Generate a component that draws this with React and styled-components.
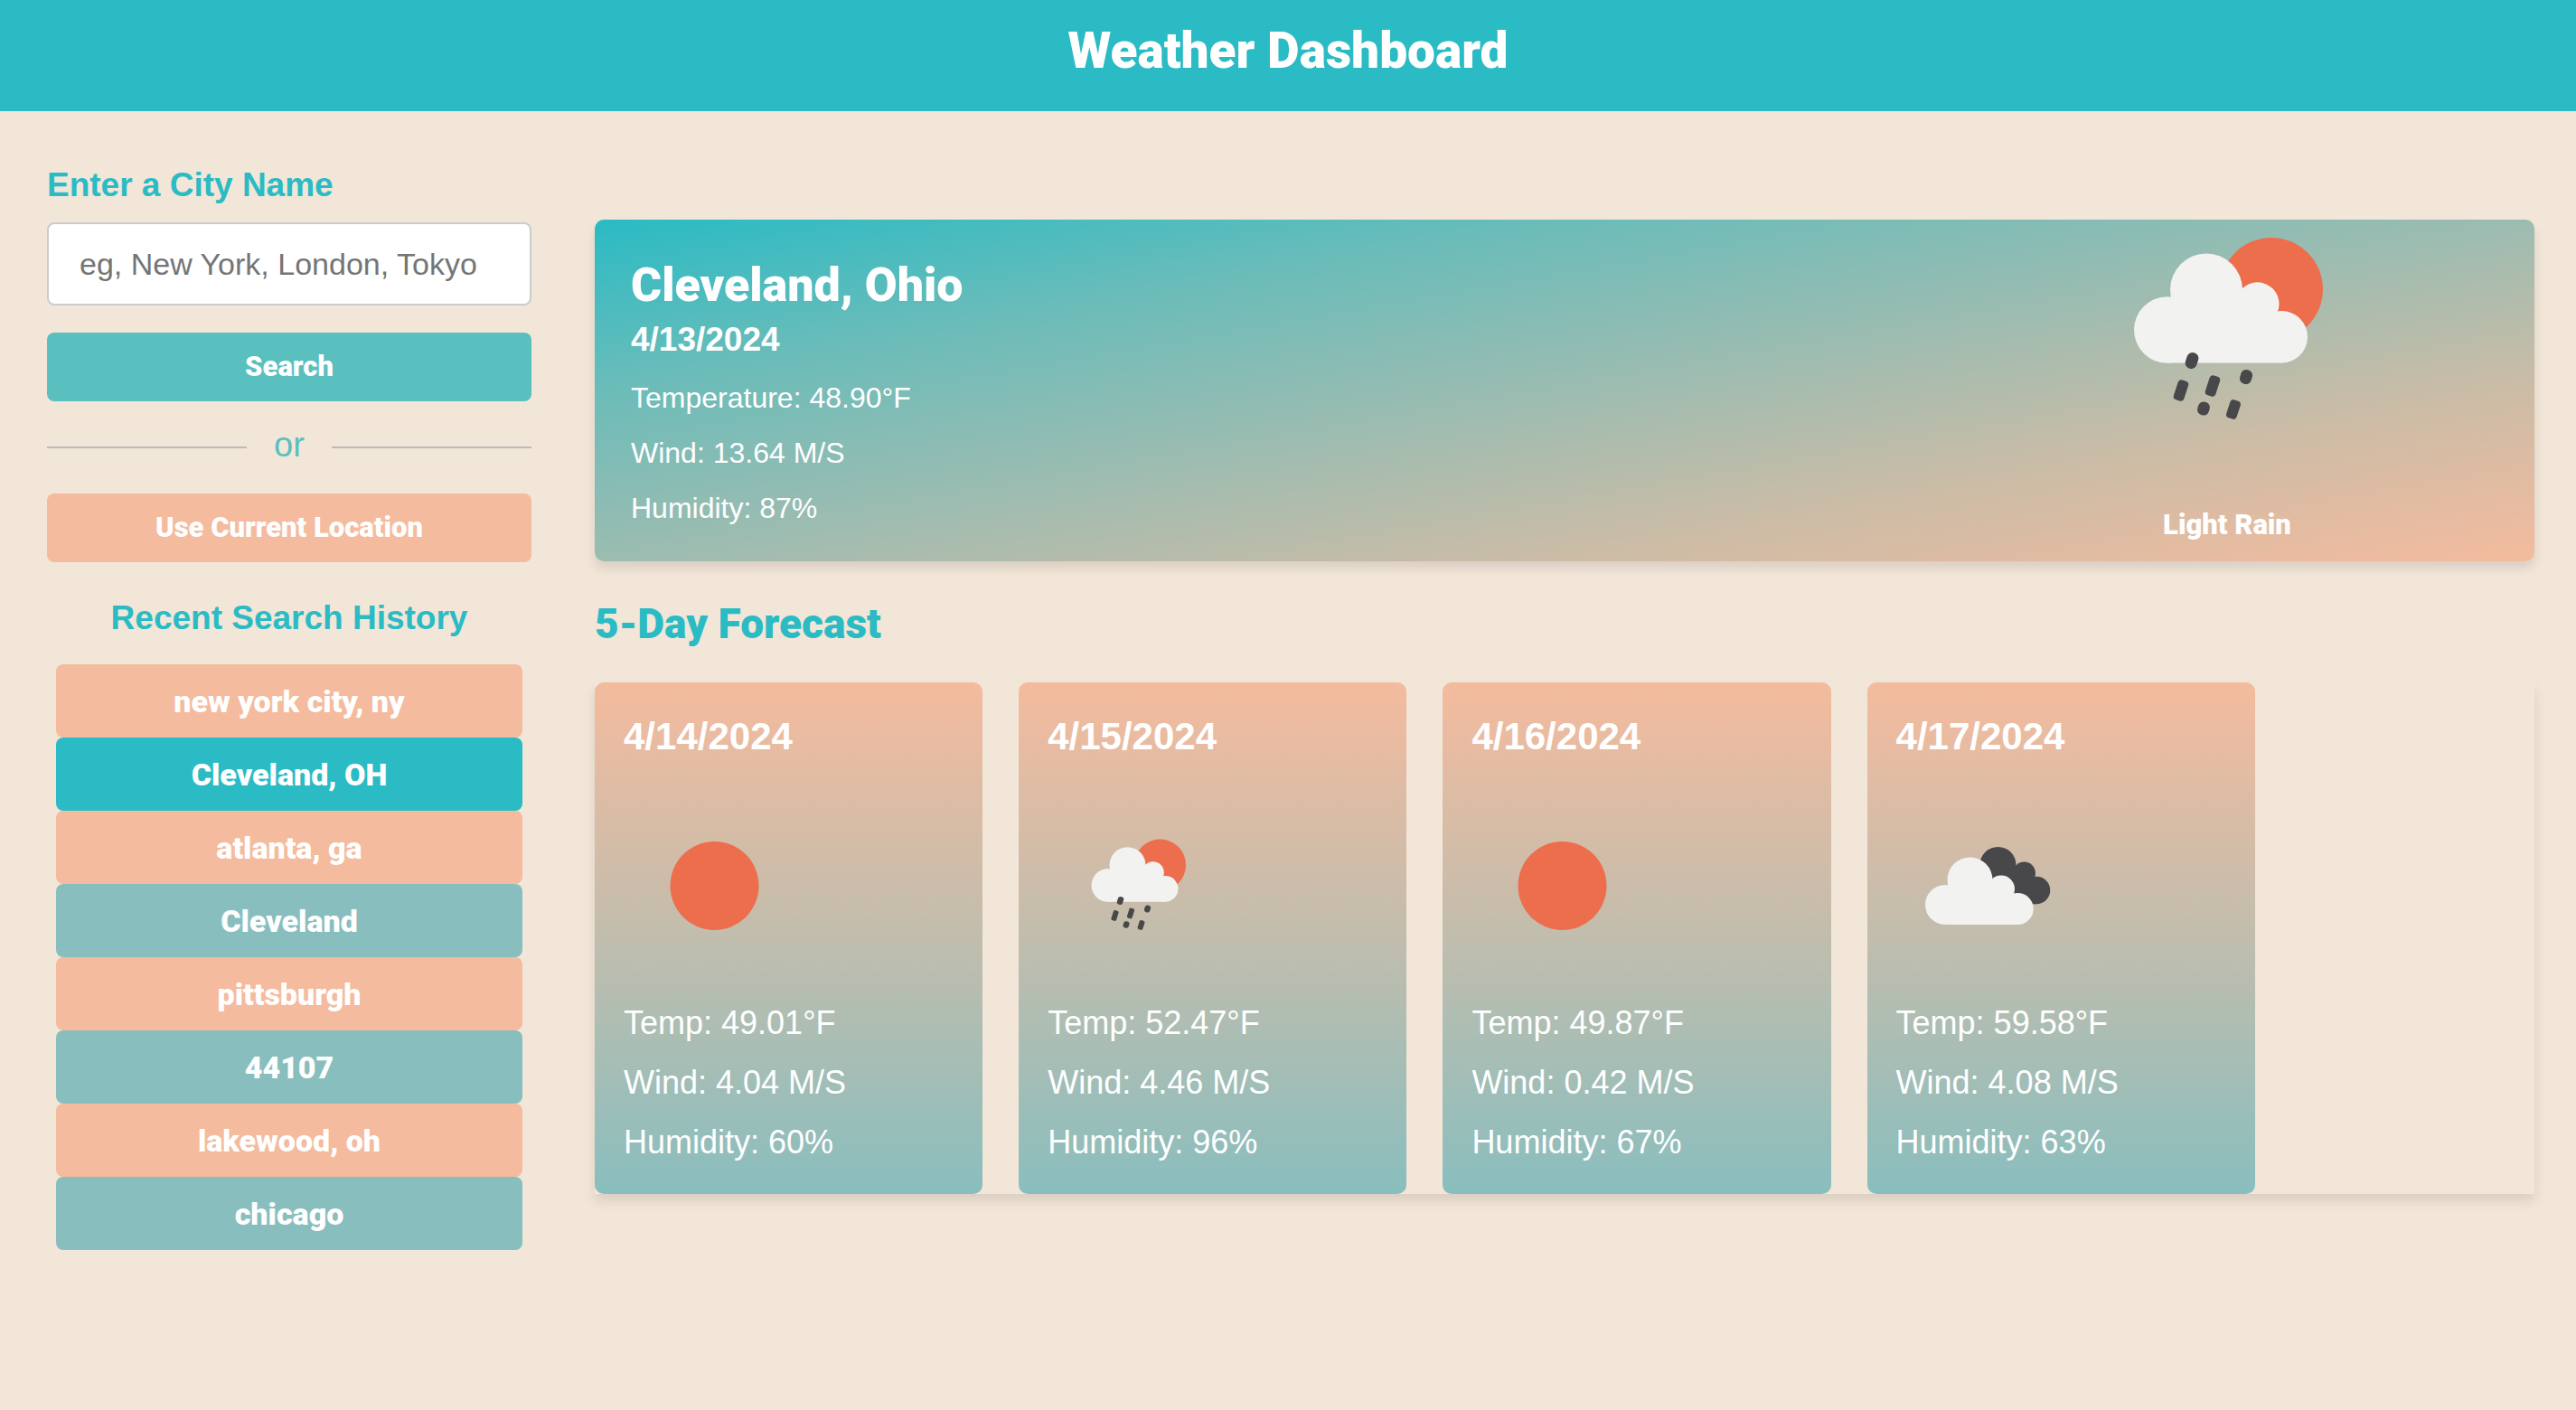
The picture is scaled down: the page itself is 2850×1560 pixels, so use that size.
import React from "react";
import styled, { createGlobalStyle } from "styled-components";

const teal = "#2abbc4";
const sea = "#5abfbf";
const mist = "#89bebe";
const peach = "#f4bb9e";
const sand = "#f2e6d8";
const heavy = `"Roboto", "Liberation Sans", sans-serif`;

const GlobalStyle = createGlobalStyle`
  *, *::before, *::after { box-sizing: border-box; }
  body {
    margin: 0;
    min-height: 100vh;
    background: ${sand};
    font-family: "Liberation Sans", Arial, sans-serif;
  }
  h1, h2, h3, p, ul { margin: 0; padding: 0; }
  ul { list-style: none; }
`;

const Header = styled.header`
  padding: 24px 24px 35px;
  background: ${teal};
  color: #fff;
  text-align: center;
`;

const Title = styled.h1`
  font: 900 55px/64px ${heavy};
`;

const Layout = styled.div`
  display: grid;
  grid-template-columns: 536px minmax(0, 1fr);
  column-gap: 70px;
  align-items: start;
  padding: 60px 46px 60px 52px;
`;

const Sidebar = styled.aside`
  display: flex;
  flex-direction: column;
`;

const SearchForm = styled.form`
  display: flex;
  flex-direction: column;
`;

const FieldLabel = styled.label`
  color: ${teal};
  font-size: 37px;
  font-weight: bold;
  line-height: 44px;
  margin-bottom: 19px;
`;

const CityInput = styled.input`
  width: 100%;
  height: 92px;
  padding: 0 34px;
  border: 2px solid #ccc;
  border-radius: 8px;
  background: #fff;
  font: 34px "Liberation Sans", Arial, sans-serif;
  &::placeholder { color: #757575; opacity: 1; }
`;

const ActionButton = styled.button`
  width: 100%;
  height: 76px;
  border: 0;
  border-radius: 8px;
  background: ${(p) => p.$color};
  color: #fff;
  font: 900 31px/36px ${heavy};
  cursor: pointer;
  margin-top: ${(p) => p.$gap || 0};
`;

const Divider = styled.div`
  display: flex;
  align-items: center;
  gap: 30px;
  height: 102px;
  color: ${sea};
  font-size: 38px;
  line-height: 44px;
  &::before, &::after {
    content: "";
    flex: 1;
    height: 2px;
    background: #bbb;
  }
`;

const DividerText = styled.span`
  padding-bottom: 6px;
`;

const HistoryTitle = styled.h2`
  margin: 40px 0 29px;
  color: ${teal};
  font-size: 37px;
  line-height: 44px;
  text-align: center;
`;

const HistoryList = styled.ul`
  padding: 0 10px;
`;

const HistoryButton = styled.button`
  display: block;
  width: 100%;
  height: 81px;
  border: 0;
  border-radius: 8px;
  background: ${(p) => p.$color};
  color: #fff;
  font: 900 34px/40px ${heavy};
  cursor: pointer;
`;

const Main = styled.main`
  padding-top: 60px;
`;

const Current = styled.section`
  display: grid;
  grid-template-columns: minmax(0, 1fr) 680px;
  height: 378px;
  border-radius: 10px;
  background: linear-gradient(
    to bottom right,
    ${teal},
    #6bbcb9 25%,
    #9cbcb1 50%,
    #cdbca6 75%,
    ${peach}
  );
  box-shadow: 0 8px 12px rgba(0, 0, 0, 0.1);
  color: #fff;
`;

const CurrentDetails = styled.div`
  padding: 41px 40px 0;
`;

const City = styled.h2`
  font: 900 52px/64px ${heavy};
`;

const CurrentDate = styled.h3`
  font-size: 37px;
  line-height: 44px;
  margin: 6px 0 12px;
`;

const CurrentStat = styled.p`
  font-size: 32px;
  line-height: 61px;
`;

const Conditions = styled.div`
  display: flex;
  flex-direction: column;
  align-items: center;
  gap: 72px;
`;

const ConditionText = styled.p`
  font: 900 31px/40px ${heavy};
`;

const IconBox = styled.svg`
  display: block;
  width: ${(p) => p.$w}px;
  height: ${(p) => p.$h}px;
`;

const ForecastTitle = styled.h2`
  margin: 40px 0 36px;
  color: ${teal};
  font: 900 46px/58px ${heavy};
`;

const ForecastRow = styled.ul`
  display: flex;
  gap: 40px;
  box-shadow: 0 8px 12px rgba(0, 0, 0, 0.1);
`;

const DayCard = styled.li`
  flex: 0 0 20%;
  padding: 36px 32px 24px;
  border-radius: 10px;
  background: linear-gradient(to bottom, ${peach}, #c1bdad 50%, ${mist});
  color: #fff;
`;

const DayDate = styled.h3`
  font-size: 42px;
  line-height: 48px;
  margin-bottom: 41px;
`;

const DayStats = styled.div`
  margin-top: 19px;
`;

const DayStat = styled.p`
  font-size: 36px;
  line-height: 66px;
`;

const ORANGE = "#ed6e4c";
const CLOUD = "#f2f2f1";
const DARK = "#48484a";

const drops = [
  [125, 179, 13, 18, 6],
  [113, 212, 12, 23, 4],
  [148, 207, 12, 23, 4],
  [185, 197, 13, 16, 6],
  [138, 232, 13, 15, 6],
  [171, 233, 12, 21, 4],
];

function RainArt() {
  return (
    <g transform="translate(36 54)">
      <circle cx="213" cy="100" r="57" fill={ORANGE} />
      <g fill={CLOUD}>
        <circle cx="141" cy="100.5" r="40" />
        <circle cx="97.7" cy="145" r="36.7" />
        <circle cx="197.5" cy="116.3" r="24" />
        <circle cx="224.3" cy="152.7" r="28.7" />
        <path d="M97.7 181.5V130L110 105h71l20 20 23.3 10v46.5z" />
      </g>
      {drops.map(([x, y, w, h, r]) => (
        <rect
          key={`${x}-${y}`}
          x={x - w / 2}
          y={y - h / 2}
          width={w}
          height={h}
          rx={r}
          fill={DARK}
          transform={`rotate(18 ${x} ${y})`}
        />
      ))}
    </g>
  );
}

function SunArt() {
  return <circle cx="201" cy="200" r="98" fill={ORANGE} />;
}

function CloudsArt() {
  return (
    <g>
      <g fill={DARK}>
        <circle cx="225" cy="154" r="40" />
        <circle cx="283" cy="172" r="25" />
        <circle cx="310" cy="210" r="30.5" />
        <path d="M225 240V160h58l27 30v50.5z" />
      </g>
      <g fill={CLOUD}>
        <circle cx="163" cy="187" r="50" />
        <circle cx="108" cy="242" r="44" />
        <circle cx="232" cy="207" r="30" />
        <circle cx="268.5" cy="251" r="35" />
        <path d="M108 286v-60l17-34h85l25 25 33.5 15v54z" />
      </g>
    </g>
  );
}

const art = { rain: RainArt, sun: SunArt, clouds: CloudsArt };

function WeatherIcon({ kind, label, width, height }) {
  const Art = art[kind];
  return (
    <IconBox
      $w={width}
      $h={height}
      viewBox="0 0 400 400"
      preserveAspectRatio="xMidYMid slice"
      role="img"
      aria-label={label}
    >
      <Art />
    </IconBox>
  );
}

const history = [
  ["new york city, ny", peach],
  ["Cleveland, OH", teal],
  ["atlanta, ga", peach],
  ["Cleveland", mist],
  ["pittsburgh", peach],
  ["44107", mist],
  ["lakewood, oh", peach],
  ["chicago", mist],
];

const days = [
  { date: "4/14/2024", kind: "sun", label: "Clear sky", temp: "49.01", wind: "4.04", humidity: 60 },
  { date: "4/15/2024", kind: "rain", label: "Light rain", temp: "52.47", wind: "4.46", humidity: 96 },
  { date: "4/16/2024", kind: "sun", label: "Clear sky", temp: "49.87", wind: "0.42", humidity: 67 },
  { date: "4/17/2024", kind: "clouds", label: "Broken clouds", temp: "59.58", wind: "4.08", humidity: 63 },
];

export default function App() {
  return (
    <>
      <GlobalStyle />
      <Header>
        <Title>Weather Dashboard</Title>
      </Header>
      <Layout>
        <Sidebar>
          <SearchForm onSubmit={(e) => e.preventDefault()}>
            <FieldLabel htmlFor="city">Enter a City Name</FieldLabel>
            <CityInput id="city" type="text" placeholder="eg, New York, London, Tokyo" />
            <ActionButton type="submit" $color={sea} $gap="30px">Search</ActionButton>
          </SearchForm>
          <Divider>
            <DividerText>or</DividerText>
          </Divider>
          <ActionButton type="button" $color={peach}>Use Current Location</ActionButton>
          <HistoryTitle>Recent Search History</HistoryTitle>
          <HistoryList>
            {history.map(([name, color]) => (
              <li key={name}>
                <HistoryButton type="button" $color={color}>{name}</HistoryButton>
              </li>
            ))}
          </HistoryList>
        </Sidebar>
        <Main>
          <Current>
            <CurrentDetails>
              <City>Cleveland, Ohio</City>
              <CurrentDate>4/13/2024</CurrentDate>
              <CurrentStat>Temperature: 48.90°F</CurrentStat>
              <CurrentStat>Wind: 13.64 M/S</CurrentStat>
              <CurrentStat>Humidity: 87%</CurrentStat>
            </CurrentDetails>
            <Conditions>
              <WeatherIcon kind="rain" label="Light rain" width={400} height={246} />
              <ConditionText>Light Rain</ConditionText>
            </Conditions>
          </Current>
          <ForecastTitle>5-Day Forecast</ForecastTitle>
          <ForecastRow>
            {days.map((d) => (
              <DayCard key={d.date}>
                <DayDate>{d.date}</DayDate>
                <WeatherIcon kind={d.kind} label={d.label} width={200} height={200} />
                <DayStats>
                  <DayStat>Temp: {d.temp}°F</DayStat>
                  <DayStat>Wind: {d.wind} M/S</DayStat>
                  <DayStat>Humidity: {d.humidity}%</DayStat>
                </DayStats>
              </DayCard>
            ))}
          </ForecastRow>
        </Main>
      </Layout>
    </>
  );
}
